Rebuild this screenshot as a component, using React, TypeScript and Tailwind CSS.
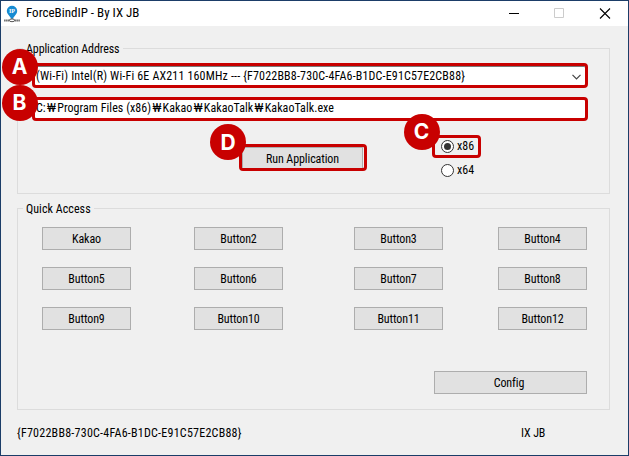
import type { ReactNode } from "react";

function Marker({ letter, className }: { letter: string; className: string }) {
  return (
    <span
      className={`absolute z-10 flex h-[36px] w-[36px] items-center justify-center rounded-full bg-[#c80000] font-['Inter','Noto_Sans',sans-serif] text-[21px] leading-none font-bold tracking-normal text-white [font-stretch:100%] ${className}`}
    >
      {letter}
    </span>
  );
}

function Group({ title, titleClass, className, children }: { title: string; titleClass: string; className: string; children: ReactNode }) {
  return (
    <section className={`flex w-[593px] flex-col border border-[#dcdcdc] ${className}`}>
      <h2 className={`-mt-[8px] ml-[5px] h-[16px] self-start bg-[#f0f0f0] px-[3px] leading-[16px] font-normal ${titleClass}`}>{title}</h2>
      {children}
    </section>
  );
}

function Radio({ label, checked }: { label: string; checked?: boolean }) {
  return (
    <label className="flex h-[13px] items-center gap-[3px] leading-[13px] tracking-[0px]">
      <span className="flex h-[13px] w-[13px] items-center justify-center rounded-full border border-[#333] bg-white">
        {checked && <span className="h-[7px] w-[7px] rounded-full bg-[#333]" />}
      </span>
      {label}
    </label>
  );
}

const button = "flex h-[23px] items-center justify-center border border-[#adadad] bg-[#e1e1e1] leading-[15px]";
const names = ["Kakao", "Button2", "Button3", "Button4", "Button5", "Button6", "Button7", "Button8", "Button9", "Button10", "Button11", "Button12"];
const path = ["C:", "Program Files (x86)", "Kakao", "KakaoTalk", "KakaoTalk.exe"];

export default function App() {
  return (
    <div className="flex h-[456px] w-[629px] flex-col overflow-hidden border border-[#1b3d68] bg-[#f0f0f0] font-['Roboto','Noto_Sans_CJK_KR',sans-serif] text-[12px] tracking-[-0.1px] text-black [font-stretch:87%]">
      <header className="flex h-[25px] shrink-0 items-center bg-white">
        <svg className="ml-[2px] shrink-0" width="18" height="18" viewBox="0 0 18 18">
          <path d="M9 14.500 5 9.300A5.200 5.200 0 1 1 13 9.300Z" fill="#168bd2" />
          <text x="9" y="8" textAnchor="middle" fontSize="6" fontFamily="Liberation Serif" fontWeight="bold" fill="#fff">IP</text>
          <path d="M1 15.5h5.500m5 0h5.500" stroke="#777" strokeWidth="2" strokeDasharray="1.6 .3" />
          <ellipse cx="9" cy="15.3" rx="2.7" ry="1.4" fill="none" stroke="#555" />
        </svg>
        <h1 className="-mt-px ml-[5px] flex-1 text-[13px] leading-[18px] font-normal tracking-[0px]">ForceBindIP - By IX JB</h1>
        <svg className="mr-[17px]" width="102" height="11" viewBox="0 0 102 11" fill="none">
          <path d="M0 5.5h10" stroke="#000" />
          <path d="M45.5.5h9v9h-9z" stroke="#ccc" />
          <path d="m91 .5 10 10m0-10-10 10" stroke="#000" strokeWidth="1.1" />
        </svg>
      </header>

      <main className="flex flex-col pl-[16px]">
        <Group title="Application Address" titleClass="tracking-[-0.1px]" className="mt-[22px] h-[146px]">
          <div className="relative mt-[6px] ml-[14px] flex h-[25px] w-[556px] shrink-0 items-center rounded-[4px] border-[3px] border-[#c80000] bg-white pr-[4px] pl-[1px] shadow-[inset_0_1px_#7a7a7a]">
            <span className="flex-1 whitespace-nowrap tracking-[0.165px]">(Wi-Fi) Intel(R) Wi-Fi 6E AX211 160MHz --- {"{F7022BB8-730C-4FA6-B1DC-E91C57E2CB88}"}</span>
            <svg className="mt-[2px]" width="9" height="6" viewBox="0 0 9 6" fill="none">
              <path d="m.5 .8 4 4 4-4" stroke="#444" strokeWidth="1.2" />
            </svg>
            <Marker letter="A" className="top-[-17.5px] left-[-33.5px]" />
          </div>
          <div className="relative mt-[9px] ml-[14px] flex h-[24px] w-[556px] shrink-0 items-center rounded-[4px] border-[3px] border-[#c80000] bg-white pl-[1px]">
            <span className="-mt-[2px] flex tracking-[0.05px] whitespace-pre">
              {path.map((part, i) => (
                <span key={i} className="flex">
                  {i > 0 && <span className="flex w-[11.5px] justify-center tracking-normal [font-stretch:100%]">₩</span>}
                  {part}
                </span>
              ))}
            </span>
            <Marker letter="B" className="top-[-15.5px] left-[-33.5px]" />
          </div>
          <div className="flex items-start">
            <div className="relative mt-[23px] ml-[221px] flex h-[27px] w-[128px] rounded-[4px] border-[3px] border-[#c80000] pr-[1px]">
              <button className="flex-1 border-t border-r border-l border-[#adadad] bg-[#e1e1e1] pt-px leading-[20px]">Run Application</button>
              <Marker letter="D" className="top-[-23px] left-[-32px]" />
            </div>
            <div className="mt-[14px] ml-[65px] flex flex-col">
              <div className="relative flex h-[23px] w-[49px] items-center rounded-[4px] border-[3px] border-[#c80000] pl-[6px]">
                <Radio label="x86" checked />
                <Marker letter="C" className="top-[-24.5px] left-[-31.5px]" />
              </div>
              <div className="mt-[6px] pl-[9px]">
                <Radio label="x64" />
              </div>
            </div>
          </div>
        </Group>

        <Group title="Quick Access" titleClass="tracking-[0.05px]" className="mt-[14px] h-[202px]">
          <div className="mt-[10px] ml-[24px] grid grid-cols-[152px_160px_144px_89px] gap-y-[17px]">
            {names.map((name) => (
              <button key={name} className={`${button} w-[89px] pt-[2px]`}>{name}</button>
            ))}
          </div>
          <button className={`${button} mt-[41px] ml-[416px] w-[153px] pt-[2px] pr-[3px]`}>Config</button>
        </Group>
      </main>

      <footer className="mt-[14px] flex pl-[16px] leading-[18px]">
        <span className="w-[504px] tracking-[0.24px]">{"{F7022BB8-730C-4FA6-B1DC-E91C57E2CB88}"}</span>
        <span>IX JB</span>
      </footer>
    </div>
  );
}
